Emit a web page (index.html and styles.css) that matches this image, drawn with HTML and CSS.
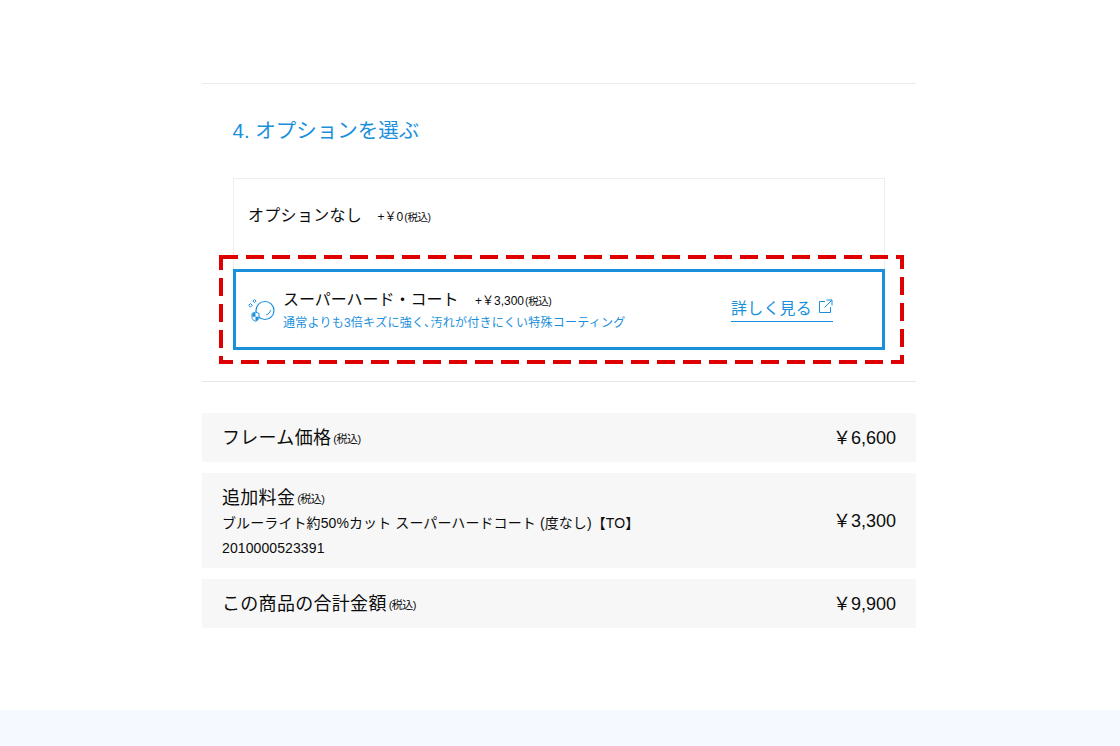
FILE: index.html
```html
<!DOCTYPE html>
<html lang="ja">
<head>
<meta charset="utf-8">
<title>オプションを選ぶ</title>
<link rel="stylesheet" href="styles.css">
</head>
<body>
<main class="page">
  <section class="options">
    <h2 class="heading">4. オプションを選ぶ</h2>
    <div class="choices">
      <div class="choice">
        <span class="choice-name choice-name-plain">オプションなし</span>
        <span class="choice-price">+<span class="yen">&#xFFE5;</span>0</span><span class="tax">(税込)</span>
      </div>
      <div class="choice-wrap">
        <svg class="callout" width="685" height="109" viewBox="0 0 685 109" aria-hidden="true">
          <rect x="2" y="2" width="681" height="105" fill="none" stroke="#de0000" stroke-width="4" stroke-dasharray="18 8" stroke-dashoffset="1"/>
        </svg>
        <div class="choice-selected">
          <svg class="coat-icon" width="28" height="26" viewBox="0 0 28 26" aria-hidden="true">
            <circle cx="17" cy="13.500" r="9" fill="none" stroke="#1a90dc" stroke-width="1.200"/>
            <path d="M22.500 13c-.3 2.400-1.800 4.100-4.200 4.800" fill="none" stroke="#1a90dc" stroke-width="1"/>
            <path d="M4 16.500l3.500-1.500 3.500 1.500v3.800c0 2-1.500 3.200-3.500 3.900-2-.7-3.500-1.900-3.500-3.900z" fill="#fff" stroke="#1a90dc" stroke-width="1"/>
            <path d="M4.500 16.800l3-1.300v4.300h-3zM7.500 19.800h3v1c0 1.600-1.300 2.500-3 3.200z" fill="#1a90dc"/>
            <path d="M2.500 6.500l1.800 1.800-1.800 1.800L.7 8.300zM6.500 2.500l1.600 1.600-1.600 1.600-1.600-1.600z" fill="none" stroke="#1a90dc" stroke-width="1"/>
          </svg>
          <div class="selected-text">
            <div class="selected-title">
              <span class="choice-name">スーパーハード・コート</span>
              <span class="choice-price">+<span class="yen">&#xFFE5;</span>3,300</span><span class="tax">(税込)</span>
            </div>
            <p class="selected-desc">通常よりも3倍キズに強く､汚れが付きにくい特殊コーティング</p>
          </div>
          <a class="detail-link" href="#">詳しく見る
            <svg width="15" height="15" viewBox="0 0 15 15" aria-hidden="true">
              <path d="M7 2.500H1.500v11h11V8M8.500 1H14v5.500M14 1L6.500 8.500" fill="none" stroke="#1a90dc" stroke-width="1"/>
            </svg>
          </a>
        </div>
      </div>
    </div>
  </section>
  <section class="summary">
    <div class="row">
      <div class="row-label"><span class="row-title">フレーム価格</span><span class="tax tax-row">(税込)</span></div>
      <div class="row-price"><span class="yen">&#xFFE5;</span>6,600</div>
    </div>
    <div class="row row-tall">
      <div class="row-label row-label-tall">
        <div class="row-head"><span class="row-title">追加料金</span><span class="tax tax-row">(税込)</span></div>
        <div class="row-detail">ブルーライト約50%カット スーパーハードコート (度なし)【TO】</div>
        <div class="row-detail">2010000523391</div>
      </div>
      <div class="row-price"><span class="yen">&#xFFE5;</span>3,300</div>
    </div>
    <div class="row">
      <div class="row-label"><span class="row-title">この商品の合計金額</span><span class="tax tax-row">(税込)</span></div>
      <div class="row-price"><span class="yen">&#xFFE5;</span>9,900</div>
    </div>
  </section>
</main>
<footer class="footer"></footer>
</body>
</html>
```
FILE: styles.css
```css
* { box-sizing: border-box; }
html, body { margin: 0; height: 746px; overflow: hidden; background: #fff; }
body {
  font-family: "Liberation Sans", "Noto Sans CJK JP", sans-serif;
  color: #0c0c0c;
}
.page { width: 714px; margin-left: 202px; padding-top: 83px; height: 710px; }
.options { border-top: 1px solid #ebebeb; border-bottom: 1px solid #e6e6e6; height: 299px; padding: 0 31px; }
.heading { margin: 0; padding-top: 33px; height: 94px; font-size: 20.500px; line-height: 28px; font-weight: 400; color: #1a90dc; text-indent: -.5px; }
.choices { display: flex; flex-direction: column; }
.choice { height: 91px; padding: 27px 14px 0; border: 1px solid #eeeeee; border-bottom: 0; line-height: 20px; }
.choice-name { font-size: 16px; margin-right: 12px; }
.choice-name-plain { letter-spacing: .3px; margin-right: 11px; }
.choice-price { font-size: 12px; line-height: 16px; }
.yen { font-family: "Noto Sans CJK JP", sans-serif; line-height: 1; }
.tax { font-size: 10.500px; margin-left: 1px; letter-spacing: -.4px; }
.tax-row { font-size: 11px; letter-spacing: -.5px; margin-left: 2px; vertical-align: 1px; }
.choice-wrap { position: relative; }
.callout { position: absolute; left: -14px; top: -14px; pointer-events: none; }
.choice-selected { height: 81px; border: 3px solid #1a90dc; display: flex; align-items: center; padding-left: 12px; background: #fff; }
.coat-icon { flex: none; margin-top: 1px; }
.selected-text { margin-left: 7px; width: 448px; }
.selected-title { line-height: 20px; margin-top: 3px; }
.selected-desc { margin: 3px 0 0; font-size: 12px; letter-spacing: .24px; line-height: 18px; color: #1a90dc; }
.detail-link { display: flex; align-items: center; gap: 6px; width: 102px; height: 30px; margin-bottom: 5px; font-size: 16px; letter-spacing: .2px; color: #1a90dc; text-decoration: none; border-bottom: 1px solid #1a90dc; }
.summary { display: flex; flex-direction: column; gap: 11px; padding-top: 31px; }
.row { display: flex; justify-content: space-between; align-items: center; background: #f7f7f7; height: 49px; padding: 0 20px; }
.row-tall { height: 95px; }
.row-label { line-height: 24px; padding-top: 2px; }
.row-label-tall { padding-top: 5px; }
.row-title { font-size: 18px; letter-spacing: .3px; line-height: 24px; }
.row-head { line-height: 24px; height: 25px; }
.row-detail { font-size: 14px; letter-spacing: .1px; line-height: 25px; height: 25px; }
.row-price { font-size: 18px; line-height: 24px; height: 24px; }
.footer { height: 36px; background: #f4faff; }
```
